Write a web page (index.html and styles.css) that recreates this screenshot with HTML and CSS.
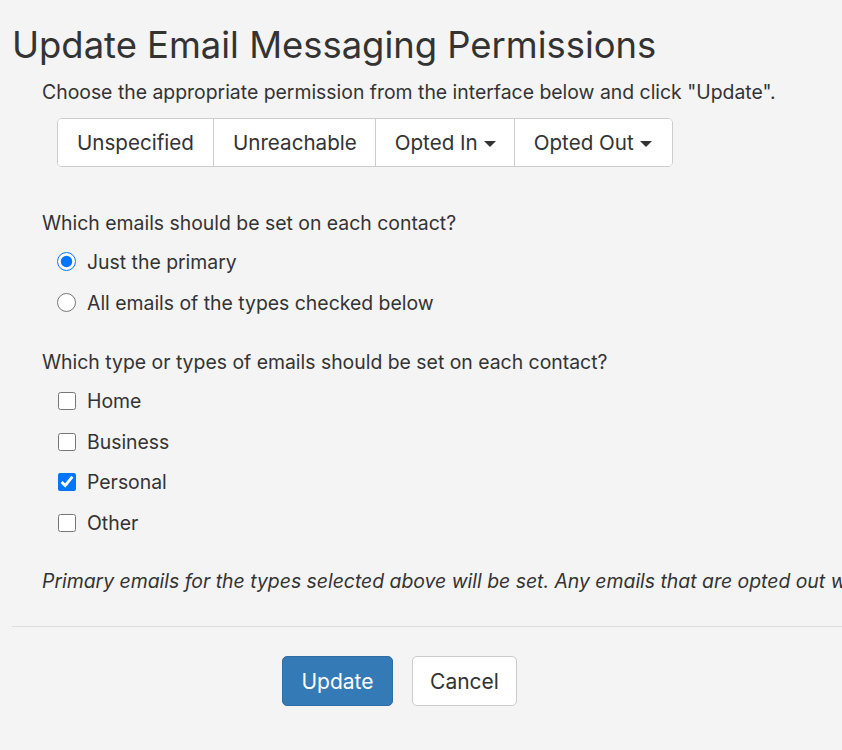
FILE: index.html
```html
<!DOCTYPE html>
<html>
<head>
<meta charset="utf-8">
<link rel="stylesheet" href="styles.css">
</head>
<body>
<h1 class="title">Update Email Messaging Permissions</h1>
<div class="content">
  <p class="line">Choose the appropriate permission from the interface below and click "Update".</p>
  <div class="btn-group">
    <button class="gbtn">Unspecified</button>
    <button class="gbtn">Unreachable</button>
    <button class="gbtn">Opted In <span class="caret"></span></button>
    <button class="gbtn">Opted Out <span class="caret"></span></button>
  </div>
  <p class="line q1">Which emails should be set on each contact?</p>
  <div class="options">
    <label class="opt"><input type="radio" name="which" checked> Just the primary</label>
    <label class="opt"><input type="radio" name="which"> All emails of the types checked below</label>
  </div>
  <p class="line q2">Which type or types of emails should be set on each contact?</p>
  <div class="checks">
    <label class="chk"><input type="checkbox"> Home</label>
    <label class="chk"><input type="checkbox"> Business</label>
    <label class="chk"><input type="checkbox" checked> Personal</label>
    <label class="chk"><input type="checkbox"> Other</label>
  </div>
  <p class="line note">Primary emails for the types selected above will be set. Any emails that are opted out will not be changed.</p>
</div>
<hr class="rule">
<div class="footer">
  <button class="btn primary">Update</button>
  <button class="btn default">Cancel</button>
</div>
</body>
</html>
```
FILE: styles.css
```css
html { overflow: hidden; }
body {
  margin: 0;
  padding: 0 0 0 12px;
  background: #f4f4f4;
  color: #333;
  font-family: Inter, "Noto Sans", sans-serif;
  font-size: 19.4px;
  width: 1150px;
}
.title {
  margin: 24px 0 0;
  font-size: 36.4px;
  line-height: 43px;
  font-weight: 400;
  color: #333;
}
.content { padding-left: 30px; }
.line { margin: 0; line-height: 28px; white-space: nowrap; }
.content > .line:first-child { margin-top: 11px; }
.btn-group {
  display: inline-flex;
  margin: 12px 0 0 15px;
  border: 1px solid #ccc;
  border-radius: 5px;
  background: #fff;
  overflow: hidden;
}
.gbtn {
  font-family: inherit;
  font-size: 20.6px;
  color: #333;
  background: #fff;
  border: 0;
  border-left: 1px solid #ccc;
  height: 47px;
  padding: 0 18px 0 19px;
  display: flex;
  align-items: center;
  gap: 6px;
}
.gbtn:first-child { border-left: 0; padding: 0 19px 0 19px; }
.gbtn:last-child { padding-right: 20px; }
.caret {
  width: 0; height: 0;
  border-left: 6px solid transparent;
  border-right: 6px solid transparent;
  border-top: 6px solid #333;
  margin-top: 2px;
}
.q1 { margin-top: 42px; }
.options, .checks { padding-left: 15px; display: flex; flex-direction: column; }
.options { margin-top: 4px; }
.opt { height: 41px; display: flex; align-items: center; gap: 11px; }
.opt input { width: 19px; height: 19px; margin: 0; }
.q2 { margin-top: 25px; }
.checks { margin-top: 5px; }
.chk { height: 40.5px; display: flex; align-items: center; gap: 11px; }
.chk input { width: 18px; height: 18px; margin: 0 0 0 1px; }
.note { margin-top: 24px; font-style: italic; }
.rule {
  margin: 31px 0 0;
  border: 0;
  border-top: 1px solid #ddd;
}
.footer { padding: 29px 0 0 270px; display: flex; gap: 19px; }
.btn {
  font-family: inherit;
  font-size: 21px;
  height: 50px;
  border-radius: 5px;
  padding: 0;
}
.primary { background: #337ab7; border: 1px solid #2e6da4; color: #fff; width: 111px; }
.default { background: #fff; border: 1px solid #ccc; color: #333; width: 105px; }
```
